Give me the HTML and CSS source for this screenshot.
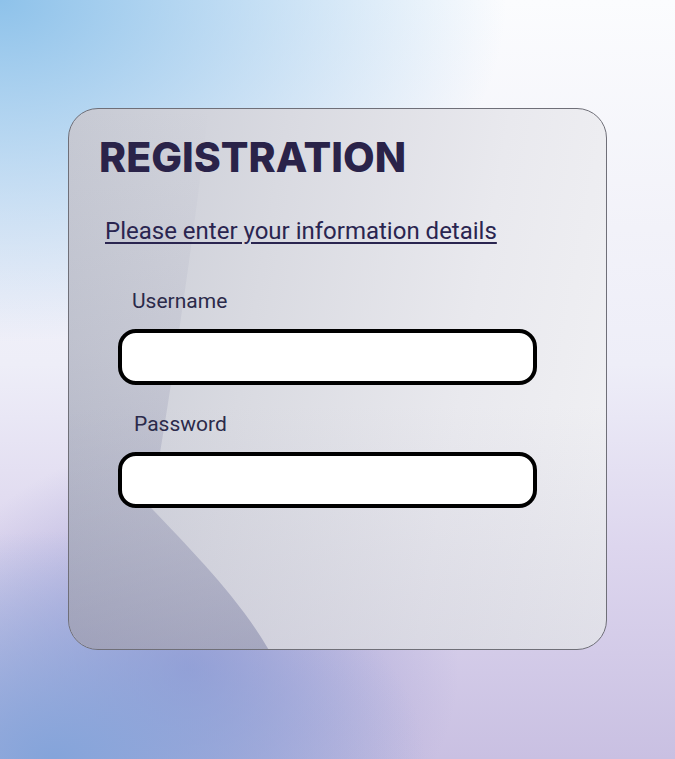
FILE: index.html
```html
<!DOCTYPE html>
<html lang="en">
<head>
<meta charset="utf-8">
<title>Registration</title>
<link rel="stylesheet" href="styles.css">
</head>
<body>
<main class="page">
  <section class="card">
    <svg class="card-glare" viewBox="0 0 539 542" preserveAspectRatio="none" aria-hidden="true">
      <defs>
        <linearGradient id="shade" x1="0" y1="0" x2="0" y2="1">
          <stop offset="0" stop-color="#8a8ca8" stop-opacity="0"/>
          <stop offset="0.45" stop-color="#7c7ea0" stop-opacity="0.14"/>
          <stop offset="1" stop-color="#6a6e98" stop-opacity="0.42"/>
        </linearGradient>
      </defs>
      <path d="M0 0 L140 0 C128 110 100 300 82 400 C120 440 170 490 200 542 L0 542 Z" fill="url(#shade)"/>
    </svg>
    <div class="card-body">
      <h1 class="title">REGISTRATION</h1>
      <p class="subtitle">Please enter your information details</p>
      <div class="field">
        <label class="label label-user" for="username">Username</label>
        <input class="input" id="username" type="text">
      </div>
      <div class="field">
        <label class="label label-pass" for="password">Password</label>
        <input class="input" id="password" type="password">
      </div>
    </div>
  </section>
</main>
</body>
</html>
```

FILE: styles.css
```css
html, body {
  margin: 0;
  padding: 0;
  height: 100%;
}

body {
  font-family: Roboto, "Liberation Sans", sans-serif;
  background:
    radial-gradient(ellipse 75% 45% at 0% 0%, rgba(142,194,234,1) 0%, rgba(150,198,236,0.6) 45%, rgba(160,200,236,0) 100%),
    radial-gradient(ellipse 55% 30% at 8% 100%, rgba(132,164,218,1) 0%, rgba(132,164,218,0) 100%),
    radial-gradient(ellipse 40% 30% at 28% 88%, rgba(150,150,208,0.85) 0%, rgba(150,150,208,0) 100%),
    linear-gradient(to bottom, #fbfcfe 0%, #f2f2f9 30%, #eeeef8 48%, #ddd6ee 72%, #c9c0e2 100%);
  overflow: hidden;
}

.page {
  display: flex;
  padding: 108px 0 0 68px;
}

.card {
  position: relative;
  box-sizing: border-box;
  width: 539px;
  height: 542px;
  border: 1.5px solid #6f6f78;
  border-radius: 30px;
  overflow: hidden;
  background:
    linear-gradient(to bottom, rgba(180,180,200,0) 0%, rgba(180,180,200,0) 55%, rgba(170,168,195,0.25) 100%),
    linear-gradient(100deg, #c6c9d3 0%, #d9dae1 35%, #e9e9ee 70%, #f1f1f4 100%);
}

.card-glare {
  position: absolute;
  inset: 0;
  width: 100%;
  height: 100%;
}

.card-body {
  position: relative;
  display: flex;
  flex-direction: column;
  padding: 24px 0 0 30px;
}

.title {
  margin: 0;
  font-family: Inter, "Open Sans", sans-serif;
  font-weight: 800;
  font-size: 41px;
  line-height: 48px;
  color: #2a2349;
}

.subtitle {
  margin: 36px 0 0 6px;
  font-size: 24px;
  line-height: 28px;
  color: #2a2550;
  text-decoration: underline;
  text-decoration-thickness: 1.5px;
  text-underline-offset: 3px;
}

.field {
  display: flex;
  flex-direction: column;
}

.label {
  font-size: 21px;
  line-height: 25px;
  color: #2b2a4a;
}

.label-user {
  margin: 44px 0 0 33px;
}

.label-pass {
  margin: 27px 0 0 35px;
}

.input {
  box-sizing: border-box;
  width: 419px;
  height: 56px;
  margin: 15px 0 0 19px;
  border: 4px solid #000;
  border-radius: 18px;
  background: #fff;
  outline: none;
}
```
